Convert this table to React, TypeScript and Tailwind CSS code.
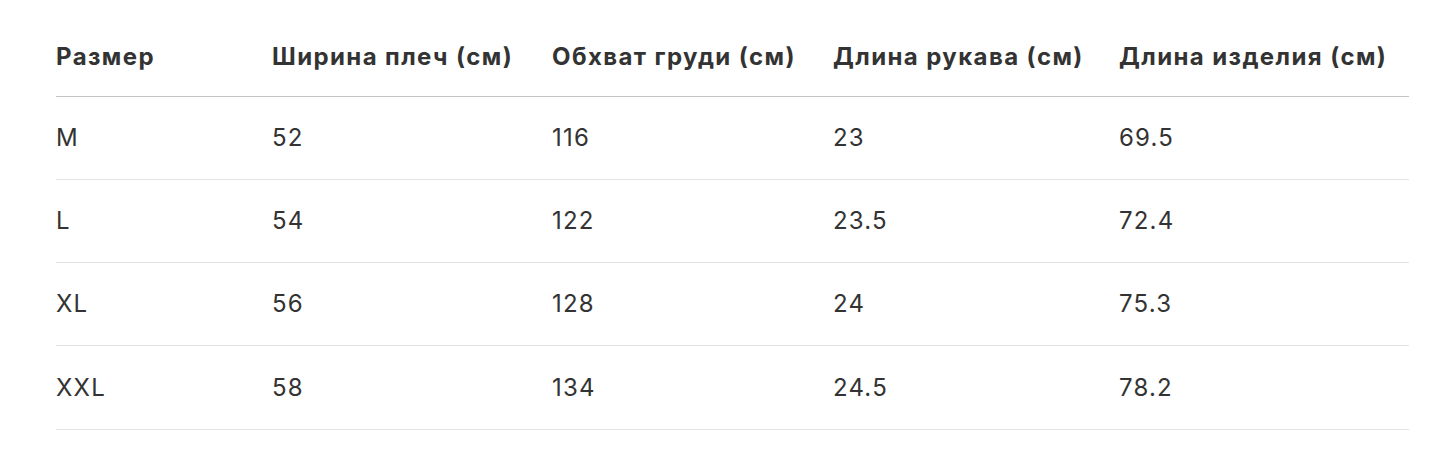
import React from 'react';

const headers = ['Размер', 'Ширина плеч (см)', 'Обхват груди (см)', 'Длина рукава (см)', 'Длина изделия (см)'];

const rows = [
  ['M', '52', '116', '23', '69.5'],
  ['L', '54', '122', '23.5', '72.4'],
  ['XL', '56', '128', '24', '75.3'],
  ['XXL', '58', '134', '24.5', '78.2'],
];

const cols = 'grid grid-cols-[216px_280px_281px_286px_1fr]';

export default function App() {
  return (
    <div className="min-h-[462px] bg-white pt-[15px] pl-[56px] pr-[47px] text-[#333] font-['Inter',sans-serif] text-[24px]">
      <div className={`${cols} h-[82px] items-center border-b border-[#c4c4c4] font-bold tracking-[1.4px] pt-[2px]`}>
        {headers.map((h) => (
          <div key={h}>{h}</div>
        ))}
      </div>
      {rows.map((r, idx) => (
        <div
          key={r[0]}
          className={`${cols} ${idx === 3 ? 'h-[84px]' : 'h-[83px]'} items-center border-b border-[#e3e3e3] tracking-[1.2px]`}
        >
          {r.map((c, i) => (
            <div key={i}>{c}</div>
          ))}
        </div>
      ))}
    </div>
  );
}
